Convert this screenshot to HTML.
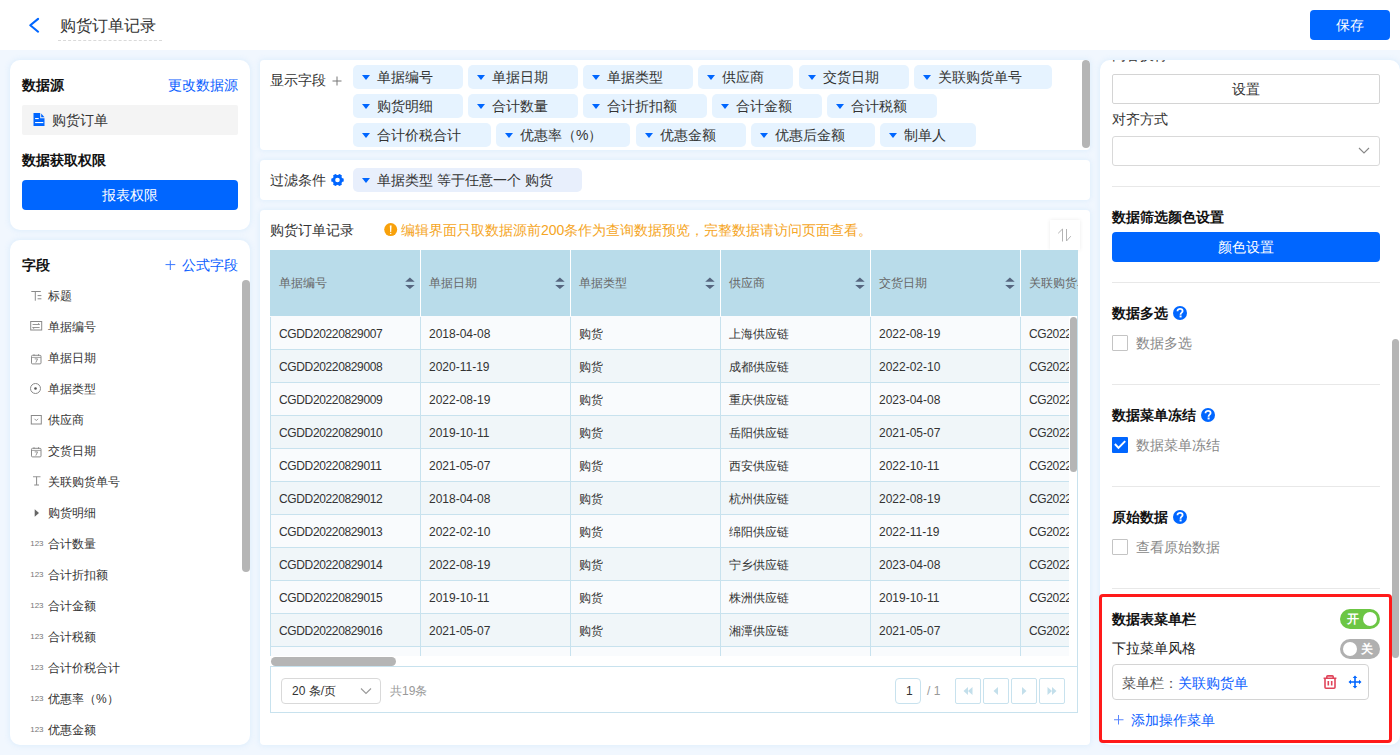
<!DOCTYPE html><html><head><meta charset="utf-8"><style>
*{box-sizing:border-box;margin:0;padding:0}
html,body{width:1400px;height:755px;overflow:hidden}
body{font-family:"Liberation Sans",sans-serif;background:#f1f7fe;color:#333;position:relative}
.a{position:absolute;white-space:nowrap;line-height:20px}
.p{position:absolute;background:#fff;overflow:hidden}
.b{font-weight:bold;color:#111;font-size:14px}
.f14{font-size:14px}.f12{font-size:12px}
.btn{position:absolute;background:#0066ff;color:#fff;border-radius:4px;text-align:center;font-size:14px}
.tag{position:absolute;height:24px;background:#e6f3ff;border-radius:5px}
.tri{position:absolute;width:0;height:0;border-left:4px solid transparent;border-right:4px solid transparent;border-top:5px solid #0066ff}
.hc{position:absolute;top:0;height:66px;background:#b9dcea;border-right:1px solid #fff}
.cell{position:absolute;font-size:12px;color:#333;line-height:20px;white-space:nowrap}
</style></head><body>
<div class="p" style="left:0;top:0;width:1400px;height:50px"></div>
<svg class="a" style="left:27px;top:16px" width="16" height="20" viewBox="0 0 16 20"><path d="M11.1 2.9 L3.3 9.3 L11.1 15.7" fill="none" stroke="#0066ff" stroke-width="2.1" stroke-linecap="round" stroke-linejoin="round"/></svg>
<div class="a" style="left:60px;top:16px;font-size:16px;color:#333">购货订单记录</div>
<div class="a" style="left:58px;top:40px;width:104px;height:0;border-top:1px dashed #d9d9d9"></div>
<div class="btn" style="left:1310px;top:10px;width:80px;height:30px;line-height:30px">保存</div>
<div class="p" style="left:10px;top:60px;width:240px;height:170px;border-radius:10px;box-shadow:0 0 5px 1px rgba(218,236,253,.85)">
<div class="a b" style="left:12px;top:15px">数据源</div>
<div class="a f14" style="left:158px;top:15px;color:#0a5eff">更改数据源</div>
<div class="a" style="left:12px;top:45px;width:216px;height:30px;background:#f4f4f4;border-radius:2px"></div>
<svg class="a" style="left:23px;top:53px" width="12" height="13" viewBox="0 0 12 13"><path d="M0.5 0 H7.2 V5.3 H11.5 V13 H0.5 Z" fill="#0066ff"/><path d="M8.2 0.6 L11.5 4.3 H8.2 Z" fill="#0066ff"/><rect x="2.1" y="5" width="3.6" height="1.1" fill="#fff"/><rect x="2.1" y="9" width="8.2" height="1.1" fill="#fff"/></svg>
<div class="a f14" style="left:42px;top:50px;color:#333">购货订单</div>
<div class="a b" style="left:12px;top:90px">数据获取权限</div>
<div class="btn" style="left:12px;top:120px;width:216px;height:30px;line-height:30px">报表权限</div>
</div>
<div class="p" style="left:10px;top:240px;width:240px;height:505px;border-radius:10px;box-shadow:0 0 5px 1px rgba(218,236,253,.85)">
<div class="a b" style="left:12px;top:15px">字段</div>
<svg class="a" style="left:155px;top:20px" width="11" height="11" viewBox="0 0 11 11"><path d="M5.3 0.5 V10 M0.5 4.6 H10.3" stroke="#3a78ff" stroke-width="1"/></svg>
<div class="a f14" style="left:172px;top:15px;color:#0a5eff">公式字段</div>
<svg class="a" style="left:18px;top:48px" width="16" height="16" viewBox="0 0 16 16"><path d="M3.3 3.5 H12.8 M7.3 3.5 V12.7" stroke="#8a8a8a" stroke-width="1" fill="none"/><path d="M9.6 7.6 H13.4 M9.6 10.8 H13.4" stroke="#8a8a8a" stroke-width="1"/></svg>
<div class="a f12" style="left:38px;top:46px;color:#333">标题</div>
<svg class="a" style="left:18px;top:79px" width="16" height="16" viewBox="0 0 16 16"><rect x="2.7" y="2.5" width="11" height="8.5" fill="none" stroke="#8a8a8a" stroke-width="1"/><path d="M4.6 5.5 H11.6 L10 4.3 M11.6 8.5 H4.6 L6.2 9.7" stroke="#8a8a8a" stroke-width="0.9" fill="none"/></svg>
<div class="a f12" style="left:38px;top:77px;color:#333">单据编号</div>
<svg class="a" style="left:18px;top:110px" width="16" height="16" viewBox="0 0 16 16"><rect x="3.5" y="5.3" width="9.5" height="8.6" rx="1" fill="none" stroke="#8a8a8a" stroke-width="1"/><path d="M3.5 7.4 H13" stroke="#8a8a8a" stroke-width="0.8"/><path d="M6 4.2 V6 M10.5 4.2 V6" stroke="#8a8a8a" stroke-width="0.9"/><path d="M6.7 8.9 H9.6 L7.8 12.6" stroke="#8a8a8a" stroke-width="0.9" fill="none"/></svg>
<div class="a f12" style="left:38px;top:108px;color:#333">单据日期</div>
<svg class="a" style="left:18px;top:141px" width="16" height="16" viewBox="0 0 16 16"><circle cx="7.5" cy="7.5" r="5" fill="none" stroke="#8a8a8a" stroke-width="1"/><circle cx="7.5" cy="7.5" r="1.3" fill="#555"/></svg>
<div class="a f12" style="left:38px;top:139px;color:#333">单据类型</div>
<svg class="a" style="left:18px;top:172px" width="16" height="16" viewBox="0 0 16 16"><rect x="3.3" y="3.5" width="10" height="8.5" fill="none" stroke="#8a8a8a" stroke-width="1"/><path d="M6.5 6.8 L8.3 8.6 L10.1 6.8" stroke="#8a8a8a" stroke-width="0.9" fill="none"/></svg>
<div class="a f12" style="left:38px;top:170px;color:#333">供应商</div>
<svg class="a" style="left:18px;top:203px" width="16" height="16" viewBox="0 0 16 16"><rect x="3.5" y="5.3" width="9.5" height="8.6" rx="1" fill="none" stroke="#8a8a8a" stroke-width="1"/><path d="M3.5 7.4 H13" stroke="#8a8a8a" stroke-width="0.8"/><path d="M6 4.2 V6 M10.5 4.2 V6" stroke="#8a8a8a" stroke-width="0.9"/><path d="M6.7 8.9 H9.6 L7.8 12.6" stroke="#8a8a8a" stroke-width="0.9" fill="none"/></svg>
<div class="a f12" style="left:38px;top:201px;color:#333">交货日期</div>
<svg class="a" style="left:18px;top:234px" width="16" height="16" viewBox="0 0 16 16"><path d="M5 2.7 H12.5" stroke="#aaa" stroke-width="1.2"/><path d="M8.6 2.7 V11 M6.2 11 H11" stroke="#8a8a8a" stroke-width="1" fill="none"/></svg>
<div class="a f12" style="left:38px;top:232px;color:#333">关联购货单号</div>
<svg class="a" style="left:18px;top:265px" width="16" height="16" viewBox="0 0 16 16"><path d="M6.7 4.2 L11 8 L6.7 11.8 Z" fill="#666"/></svg>
<div class="a f12" style="left:38px;top:263px;color:#333">购货明细</div>
<svg class="a" style="left:18px;top:296px" width="16" height="16" viewBox="0 0 16 16"><text x="2.2" y="10.3" font-size="8" fill="#777" font-family="Liberation Sans">123</text></svg>
<div class="a f12" style="left:38px;top:294px;color:#333">合计数量</div>
<svg class="a" style="left:18px;top:327px" width="16" height="16" viewBox="0 0 16 16"><text x="2.2" y="10.3" font-size="8" fill="#777" font-family="Liberation Sans">123</text></svg>
<div class="a f12" style="left:38px;top:325px;color:#333">合计折扣额</div>
<svg class="a" style="left:18px;top:358px" width="16" height="16" viewBox="0 0 16 16"><text x="2.2" y="10.3" font-size="8" fill="#777" font-family="Liberation Sans">123</text></svg>
<div class="a f12" style="left:38px;top:356px;color:#333">合计金额</div>
<svg class="a" style="left:18px;top:389px" width="16" height="16" viewBox="0 0 16 16"><text x="2.2" y="10.3" font-size="8" fill="#777" font-family="Liberation Sans">123</text></svg>
<div class="a f12" style="left:38px;top:387px;color:#333">合计税额</div>
<svg class="a" style="left:18px;top:420px" width="16" height="16" viewBox="0 0 16 16"><text x="2.2" y="10.3" font-size="8" fill="#777" font-family="Liberation Sans">123</text></svg>
<div class="a f12" style="left:38px;top:418px;color:#333">合计价税合计</div>
<svg class="a" style="left:18px;top:451px" width="16" height="16" viewBox="0 0 16 16"><text x="2.2" y="10.3" font-size="8" fill="#777" font-family="Liberation Sans">123</text></svg>
<div class="a f12" style="left:38px;top:449px;color:#333">优惠率（%）</div>
<svg class="a" style="left:18px;top:482px" width="16" height="16" viewBox="0 0 16 16"><text x="2.2" y="10.3" font-size="8" fill="#777" font-family="Liberation Sans">123</text></svg>
<div class="a f12" style="left:38px;top:480px;color:#333">优惠金额</div>
<div class="a" style="left:232px;top:40px;width:8px;height:292px;background:#b5b5b5;border-radius:4px"></div>
</div>
<div class="p" style="left:260px;top:60px;width:830px;height:90px;border-radius:4px;box-shadow:0 0 5px 1px rgba(218,236,253,.85)">
<div class="a f14" style="left:10px;top:10px;color:#333">显示字段</div>
<svg class="a" style="left:72px;top:16px" width="10" height="10" viewBox="0 0 10 10"><path d="M5 0.5 V9.5 M0.5 5 H9.5" stroke="#777" stroke-width="1"/></svg>
<div class="tag" style="left:93px;top:5px;width:110px"></div>
<div class="tri" style="left:102px;top:15px"></div>
<div class="a f14" style="left:117px;top:7px;color:#333">单据编号</div>
<div class="tag" style="left:208px;top:5px;width:110px"></div>
<div class="tri" style="left:217px;top:15px"></div>
<div class="a f14" style="left:232px;top:7px;color:#333">单据日期</div>
<div class="tag" style="left:323px;top:5px;width:110px"></div>
<div class="tri" style="left:332px;top:15px"></div>
<div class="a f14" style="left:347px;top:7px;color:#333">单据类型</div>
<div class="tag" style="left:438px;top:5px;width:95px"></div>
<div class="tri" style="left:447px;top:15px"></div>
<div class="a f14" style="left:462px;top:7px;color:#333">供应商</div>
<div class="tag" style="left:539px;top:5px;width:110px"></div>
<div class="tri" style="left:548px;top:15px"></div>
<div class="a f14" style="left:563px;top:7px;color:#333">交货日期</div>
<div class="tag" style="left:654px;top:5px;width:138px"></div>
<div class="tri" style="left:663px;top:15px"></div>
<div class="a f14" style="left:678px;top:7px;color:#333">关联购货单号</div>
<div class="tag" style="left:93px;top:34px;width:110px"></div>
<div class="tri" style="left:102px;top:44px"></div>
<div class="a f14" style="left:117px;top:36px;color:#333">购货明细</div>
<div class="tag" style="left:208px;top:34px;width:110px"></div>
<div class="tri" style="left:217px;top:44px"></div>
<div class="a f14" style="left:232px;top:36px;color:#333">合计数量</div>
<div class="tag" style="left:323px;top:34px;width:124px"></div>
<div class="tri" style="left:332px;top:44px"></div>
<div class="a f14" style="left:347px;top:36px;color:#333">合计折扣额</div>
<div class="tag" style="left:452px;top:34px;width:110px"></div>
<div class="tri" style="left:461px;top:44px"></div>
<div class="a f14" style="left:476px;top:36px;color:#333">合计金额</div>
<div class="tag" style="left:567px;top:34px;width:110px"></div>
<div class="tri" style="left:576px;top:44px"></div>
<div class="a f14" style="left:591px;top:36px;color:#333">合计税额</div>
<div class="tag" style="left:93px;top:63px;width:138px"></div>
<div class="tri" style="left:102px;top:73px"></div>
<div class="a f14" style="left:117px;top:65px;color:#333">合计价税合计</div>
<div class="tag" style="left:236px;top:63px;width:134px"></div>
<div class="tri" style="left:245px;top:73px"></div>
<div class="a f14" style="left:260px;top:65px;color:#333">优惠率（%）</div>
<div class="tag" style="left:376px;top:63px;width:110px"></div>
<div class="tri" style="left:385px;top:73px"></div>
<div class="a f14" style="left:400px;top:65px;color:#333">优惠金额</div>
<div class="tag" style="left:491px;top:63px;width:124px"></div>
<div class="tri" style="left:500px;top:73px"></div>
<div class="a f14" style="left:515px;top:65px;color:#333">优惠后金额</div>
<div class="tag" style="left:620px;top:63px;width:96px"></div>
<div class="tri" style="left:629px;top:73px"></div>
<div class="a f14" style="left:644px;top:65px;color:#333">制单人</div>
<div class="a" style="left:822px;top:0px;width:8px;height:88px;background:#b5b5b5;border-radius:4px"></div>
</div>
<div class="p" style="left:260px;top:160px;width:830px;height:40px;border-radius:4px;box-shadow:0 0 5px 1px rgba(218,236,253,.85)">
<div class="a f14" style="left:10px;top:10px;color:#333">过滤条件</div>
<svg class="a" style="left:70px;top:13px" width="15" height="14" viewBox="0 0 15 14"><g transform="translate(7.5,7)"><circle r="5.1" fill="#0066ff"/><rect x="-1.8" y="-6.2" width="3.6" height="3" rx="0.9" fill="#0066ff" transform="rotate(30)"/><rect x="-1.8" y="-6.2" width="3.6" height="3" rx="0.9" fill="#0066ff" transform="rotate(90)"/><rect x="-1.8" y="-6.2" width="3.6" height="3" rx="0.9" fill="#0066ff" transform="rotate(150)"/><rect x="-1.8" y="-6.2" width="3.6" height="3" rx="0.9" fill="#0066ff" transform="rotate(210)"/><rect x="-1.8" y="-6.2" width="3.6" height="3" rx="0.9" fill="#0066ff" transform="rotate(270)"/><rect x="-1.8" y="-6.2" width="3.6" height="3" rx="0.9" fill="#0066ff" transform="rotate(330)"/><circle r="2.3" fill="#fff"/></g></svg>
<div class="tag" style="left:93px;top:8px;width:229px;background:#e8effc"></div>
<div class="tri" style="left:102px;top:18px"></div>
<div class="a f14" style="left:117px;top:10px;color:#333">单据类型 等于任意一个 购货</div>
</div>
<div class="p" style="left:260px;top:210px;width:830px;height:535px;border-radius:4px;box-shadow:0 0 5px 1px rgba(218,236,253,.85)">
<div class="a f14" style="left:10px;top:10px;color:#333">购货订单记录</div>
<svg class="a" style="left:124px;top:13px" width="14" height="14" viewBox="0 0 14 14"><circle cx="6.7" cy="6.6" r="6.5" fill="#f8a10b"/><path d="M5.8 2.5 H7.6 L7.2 9 H6.2 Z" fill="#fff"/><rect x="6.1" y="9.9" width="1.2" height="1.2" fill="#fff"/></svg>
<div class="a f14" style="left:141px;top:10px;color:#f5a524">编辑界面只取数据源前200条作为查询数据预览，完整数据请访问页面查看。</div>
<div class="a" style="left:790px;top:10px;width:30px;height:30px;background:#fff;box-shadow:0 0 4px rgba(0,0,0,.08)"></div>
<svg class="a" style="left:797px;top:17px" width="16" height="16" viewBox="0 0 16 16"><path d="M5.5 14.5 V2 L1.2 6.3" stroke="#b3b3b3" stroke-width="1" fill="none"/><path d="M9.5 2 V14 L13.8 9.2" stroke="#b3b3b3" stroke-width="1" fill="none"/></svg>
<div class="a" style="left:10px;top:40px;width:808px;height:66px;overflow:hidden">
<div class="a" style="left:0;top:0;width:900px;height:66px;background:#b9dcea"></div>
<div class="a" style="left:150px;top:0;width:1px;height:66px;background:#fff"></div>
<div class="cell" style="left:9px;top:23px;color:#666">单据编号</div>
<svg class="a" style="left:135px;top:27px" width="10" height="13" viewBox="0 0 10 13"><path d="M0.2 4.8 L4.9 0.6 L9.7 4.8 Z M0.2 8.1 L4.9 12.1 L9.7 8.1 Z" fill="#56667f"/></svg>
<div class="a" style="left:300px;top:0;width:1px;height:66px;background:#fff"></div>
<div class="cell" style="left:159px;top:23px;color:#666">单据日期</div>
<svg class="a" style="left:285px;top:27px" width="10" height="13" viewBox="0 0 10 13"><path d="M0.2 4.8 L4.9 0.6 L9.7 4.8 Z M0.2 8.1 L4.9 12.1 L9.7 8.1 Z" fill="#56667f"/></svg>
<div class="a" style="left:450px;top:0;width:1px;height:66px;background:#fff"></div>
<div class="cell" style="left:309px;top:23px;color:#666">单据类型</div>
<svg class="a" style="left:435px;top:27px" width="10" height="13" viewBox="0 0 10 13"><path d="M0.2 4.8 L4.9 0.6 L9.7 4.8 Z M0.2 8.1 L4.9 12.1 L9.7 8.1 Z" fill="#56667f"/></svg>
<div class="a" style="left:600px;top:0;width:1px;height:66px;background:#fff"></div>
<div class="cell" style="left:459px;top:23px;color:#666">供应商</div>
<svg class="a" style="left:585px;top:27px" width="10" height="13" viewBox="0 0 10 13"><path d="M0.2 4.8 L4.9 0.6 L9.7 4.8 Z M0.2 8.1 L4.9 12.1 L9.7 8.1 Z" fill="#56667f"/></svg>
<div class="a" style="left:750px;top:0;width:1px;height:66px;background:#fff"></div>
<div class="cell" style="left:609px;top:23px;color:#666">交货日期</div>
<svg class="a" style="left:735px;top:27px" width="10" height="13" viewBox="0 0 10 13"><path d="M0.2 4.8 L4.9 0.6 L9.7 4.8 Z M0.2 8.1 L4.9 12.1 L9.7 8.1 Z" fill="#56667f"/></svg>
<div class="a" style="left:900px;top:0;width:1px;height:66px;background:#fff"></div>
<div class="cell" style="left:759px;top:23px;color:#666">关联购货单号</div>
</div>
<div class="a" style="left:10px;top:106px;width:808px;height:340px;background:#fff"></div>
<div class="a" style="left:817px;top:106px;width:1px;height:397px;background:#c8e2ee"></div>
<div class="a" style="left:10px;top:40px;width:799px;height:406px;overflow:hidden">
<div class="a" style="left:0;top:66px;width:900px;height:34px;background:#f9fbfd;border-bottom:1px solid #c8e2ee"></div>
<div class="a" style="left:0px;top:67px;width:1px;height:32px;background:#c8e2ee"></div>
<div class="a" style="left:150px;top:67px;width:1px;height:32px;background:#c8e2ee"></div>
<div class="a" style="left:300px;top:67px;width:1px;height:32px;background:#c8e2ee"></div>
<div class="a" style="left:450px;top:67px;width:1px;height:32px;background:#c8e2ee"></div>
<div class="a" style="left:600px;top:67px;width:1px;height:32px;background:#c8e2ee"></div>
<div class="a" style="left:750px;top:67px;width:1px;height:32px;background:#c8e2ee"></div>
<div class="cell" style="left:9px;top:74px;letter-spacing:-0.36px;">CGDD20220829007</div>
<div class="cell" style="left:159px;top:74px;">2018-04-08</div>
<div class="cell" style="left:309px;top:74px;">购货</div>
<div class="cell" style="left:459px;top:74px;">上海供应链</div>
<div class="cell" style="left:609px;top:74px;">2022-08-19</div>
<div class="cell" style="left:759px;top:74px;letter-spacing:-0.36px;">CG20220829007</div>
<div class="a" style="left:0;top:100px;width:900px;height:33px;background:#f0f6f9;border-bottom:1px solid #c8e2ee"></div>
<div class="a" style="left:0px;top:100px;width:1px;height:32px;background:#c8e2ee"></div>
<div class="a" style="left:150px;top:100px;width:1px;height:32px;background:#c8e2ee"></div>
<div class="a" style="left:300px;top:100px;width:1px;height:32px;background:#c8e2ee"></div>
<div class="a" style="left:450px;top:100px;width:1px;height:32px;background:#c8e2ee"></div>
<div class="a" style="left:600px;top:100px;width:1px;height:32px;background:#c8e2ee"></div>
<div class="a" style="left:750px;top:100px;width:1px;height:32px;background:#c8e2ee"></div>
<div class="cell" style="left:9px;top:107px;letter-spacing:-0.36px;">CGDD20220829008</div>
<div class="cell" style="left:159px;top:107px;">2020-11-19</div>
<div class="cell" style="left:309px;top:107px;">购货</div>
<div class="cell" style="left:459px;top:107px;">成都供应链</div>
<div class="cell" style="left:609px;top:107px;">2022-02-10</div>
<div class="cell" style="left:759px;top:107px;letter-spacing:-0.36px;">CG20220829008</div>
<div class="a" style="left:0;top:133px;width:900px;height:33px;background:#f9fbfd;border-bottom:1px solid #c8e2ee"></div>
<div class="a" style="left:0px;top:133px;width:1px;height:32px;background:#c8e2ee"></div>
<div class="a" style="left:150px;top:133px;width:1px;height:32px;background:#c8e2ee"></div>
<div class="a" style="left:300px;top:133px;width:1px;height:32px;background:#c8e2ee"></div>
<div class="a" style="left:450px;top:133px;width:1px;height:32px;background:#c8e2ee"></div>
<div class="a" style="left:600px;top:133px;width:1px;height:32px;background:#c8e2ee"></div>
<div class="a" style="left:750px;top:133px;width:1px;height:32px;background:#c8e2ee"></div>
<div class="cell" style="left:9px;top:140px;letter-spacing:-0.36px;">CGDD20220829009</div>
<div class="cell" style="left:159px;top:140px;">2022-08-19</div>
<div class="cell" style="left:309px;top:140px;">购货</div>
<div class="cell" style="left:459px;top:140px;">重庆供应链</div>
<div class="cell" style="left:609px;top:140px;">2023-04-08</div>
<div class="cell" style="left:759px;top:140px;letter-spacing:-0.36px;">CG20220829009</div>
<div class="a" style="left:0;top:166px;width:900px;height:33px;background:#f0f6f9;border-bottom:1px solid #c8e2ee"></div>
<div class="a" style="left:0px;top:166px;width:1px;height:32px;background:#c8e2ee"></div>
<div class="a" style="left:150px;top:166px;width:1px;height:32px;background:#c8e2ee"></div>
<div class="a" style="left:300px;top:166px;width:1px;height:32px;background:#c8e2ee"></div>
<div class="a" style="left:450px;top:166px;width:1px;height:32px;background:#c8e2ee"></div>
<div class="a" style="left:600px;top:166px;width:1px;height:32px;background:#c8e2ee"></div>
<div class="a" style="left:750px;top:166px;width:1px;height:32px;background:#c8e2ee"></div>
<div class="cell" style="left:9px;top:173px;letter-spacing:-0.36px;">CGDD20220829010</div>
<div class="cell" style="left:159px;top:173px;">2019-10-11</div>
<div class="cell" style="left:309px;top:173px;">购货</div>
<div class="cell" style="left:459px;top:173px;">岳阳供应链</div>
<div class="cell" style="left:609px;top:173px;">2021-05-07</div>
<div class="cell" style="left:759px;top:173px;letter-spacing:-0.36px;">CG20220829010</div>
<div class="a" style="left:0;top:199px;width:900px;height:33px;background:#f9fbfd;border-bottom:1px solid #c8e2ee"></div>
<div class="a" style="left:0px;top:199px;width:1px;height:32px;background:#c8e2ee"></div>
<div class="a" style="left:150px;top:199px;width:1px;height:32px;background:#c8e2ee"></div>
<div class="a" style="left:300px;top:199px;width:1px;height:32px;background:#c8e2ee"></div>
<div class="a" style="left:450px;top:199px;width:1px;height:32px;background:#c8e2ee"></div>
<div class="a" style="left:600px;top:199px;width:1px;height:32px;background:#c8e2ee"></div>
<div class="a" style="left:750px;top:199px;width:1px;height:32px;background:#c8e2ee"></div>
<div class="cell" style="left:9px;top:206px;letter-spacing:-0.36px;">CGDD20220829011</div>
<div class="cell" style="left:159px;top:206px;">2021-05-07</div>
<div class="cell" style="left:309px;top:206px;">购货</div>
<div class="cell" style="left:459px;top:206px;">西安供应链</div>
<div class="cell" style="left:609px;top:206px;">2022-10-11</div>
<div class="cell" style="left:759px;top:206px;letter-spacing:-0.36px;">CG20220829011</div>
<div class="a" style="left:0;top:232px;width:900px;height:33px;background:#f0f6f9;border-bottom:1px solid #c8e2ee"></div>
<div class="a" style="left:0px;top:232px;width:1px;height:32px;background:#c8e2ee"></div>
<div class="a" style="left:150px;top:232px;width:1px;height:32px;background:#c8e2ee"></div>
<div class="a" style="left:300px;top:232px;width:1px;height:32px;background:#c8e2ee"></div>
<div class="a" style="left:450px;top:232px;width:1px;height:32px;background:#c8e2ee"></div>
<div class="a" style="left:600px;top:232px;width:1px;height:32px;background:#c8e2ee"></div>
<div class="a" style="left:750px;top:232px;width:1px;height:32px;background:#c8e2ee"></div>
<div class="cell" style="left:9px;top:239px;letter-spacing:-0.36px;">CGDD20220829012</div>
<div class="cell" style="left:159px;top:239px;">2018-04-08</div>
<div class="cell" style="left:309px;top:239px;">购货</div>
<div class="cell" style="left:459px;top:239px;">杭州供应链</div>
<div class="cell" style="left:609px;top:239px;">2022-08-19</div>
<div class="cell" style="left:759px;top:239px;letter-spacing:-0.36px;">CG20220829012</div>
<div class="a" style="left:0;top:265px;width:900px;height:33px;background:#f9fbfd;border-bottom:1px solid #c8e2ee"></div>
<div class="a" style="left:0px;top:265px;width:1px;height:32px;background:#c8e2ee"></div>
<div class="a" style="left:150px;top:265px;width:1px;height:32px;background:#c8e2ee"></div>
<div class="a" style="left:300px;top:265px;width:1px;height:32px;background:#c8e2ee"></div>
<div class="a" style="left:450px;top:265px;width:1px;height:32px;background:#c8e2ee"></div>
<div class="a" style="left:600px;top:265px;width:1px;height:32px;background:#c8e2ee"></div>
<div class="a" style="left:750px;top:265px;width:1px;height:32px;background:#c8e2ee"></div>
<div class="cell" style="left:9px;top:272px;letter-spacing:-0.36px;">CGDD20220829013</div>
<div class="cell" style="left:159px;top:272px;">2022-02-10</div>
<div class="cell" style="left:309px;top:272px;">购货</div>
<div class="cell" style="left:459px;top:272px;">绵阳供应链</div>
<div class="cell" style="left:609px;top:272px;">2022-11-19</div>
<div class="cell" style="left:759px;top:272px;letter-spacing:-0.36px;">CG20220829013</div>
<div class="a" style="left:0;top:298px;width:900px;height:33px;background:#f0f6f9;border-bottom:1px solid #c8e2ee"></div>
<div class="a" style="left:0px;top:298px;width:1px;height:32px;background:#c8e2ee"></div>
<div class="a" style="left:150px;top:298px;width:1px;height:32px;background:#c8e2ee"></div>
<div class="a" style="left:300px;top:298px;width:1px;height:32px;background:#c8e2ee"></div>
<div class="a" style="left:450px;top:298px;width:1px;height:32px;background:#c8e2ee"></div>
<div class="a" style="left:600px;top:298px;width:1px;height:32px;background:#c8e2ee"></div>
<div class="a" style="left:750px;top:298px;width:1px;height:32px;background:#c8e2ee"></div>
<div class="cell" style="left:9px;top:305px;letter-spacing:-0.36px;">CGDD20220829014</div>
<div class="cell" style="left:159px;top:305px;">2022-08-19</div>
<div class="cell" style="left:309px;top:305px;">购货</div>
<div class="cell" style="left:459px;top:305px;">宁乡供应链</div>
<div class="cell" style="left:609px;top:305px;">2023-04-08</div>
<div class="cell" style="left:759px;top:305px;letter-spacing:-0.36px;">CG20220829014</div>
<div class="a" style="left:0;top:331px;width:900px;height:33px;background:#f9fbfd;border-bottom:1px solid #c8e2ee"></div>
<div class="a" style="left:0px;top:331px;width:1px;height:32px;background:#c8e2ee"></div>
<div class="a" style="left:150px;top:331px;width:1px;height:32px;background:#c8e2ee"></div>
<div class="a" style="left:300px;top:331px;width:1px;height:32px;background:#c8e2ee"></div>
<div class="a" style="left:450px;top:331px;width:1px;height:32px;background:#c8e2ee"></div>
<div class="a" style="left:600px;top:331px;width:1px;height:32px;background:#c8e2ee"></div>
<div class="a" style="left:750px;top:331px;width:1px;height:32px;background:#c8e2ee"></div>
<div class="cell" style="left:9px;top:338px;letter-spacing:-0.36px;">CGDD20220829015</div>
<div class="cell" style="left:159px;top:338px;">2019-10-11</div>
<div class="cell" style="left:309px;top:338px;">购货</div>
<div class="cell" style="left:459px;top:338px;">株洲供应链</div>
<div class="cell" style="left:609px;top:338px;">2019-10-11</div>
<div class="cell" style="left:759px;top:338px;letter-spacing:-0.36px;">CG20220829015</div>
<div class="a" style="left:0;top:364px;width:900px;height:33px;background:#f0f6f9;border-bottom:1px solid #c8e2ee"></div>
<div class="a" style="left:0px;top:364px;width:1px;height:32px;background:#c8e2ee"></div>
<div class="a" style="left:150px;top:364px;width:1px;height:32px;background:#c8e2ee"></div>
<div class="a" style="left:300px;top:364px;width:1px;height:32px;background:#c8e2ee"></div>
<div class="a" style="left:450px;top:364px;width:1px;height:32px;background:#c8e2ee"></div>
<div class="a" style="left:600px;top:364px;width:1px;height:32px;background:#c8e2ee"></div>
<div class="a" style="left:750px;top:364px;width:1px;height:32px;background:#c8e2ee"></div>
<div class="cell" style="left:9px;top:371px;letter-spacing:-0.36px;">CGDD20220829016</div>
<div class="cell" style="left:159px;top:371px;">2021-05-07</div>
<div class="cell" style="left:309px;top:371px;">购货</div>
<div class="cell" style="left:459px;top:371px;">湘潭供应链</div>
<div class="cell" style="left:609px;top:371px;">2021-05-07</div>
<div class="cell" style="left:759px;top:371px;letter-spacing:-0.36px;">CG20220829016</div>
<div class="a" style="left:0;top:397px;width:900px;height:33px;background:#f9fbfd;border-bottom:1px solid #c8e2ee"></div>
<div class="a" style="left:0px;top:397px;width:1px;height:32px;background:#c8e2ee"></div>
<div class="a" style="left:150px;top:397px;width:1px;height:32px;background:#c8e2ee"></div>
<div class="a" style="left:300px;top:397px;width:1px;height:32px;background:#c8e2ee"></div>
<div class="a" style="left:450px;top:397px;width:1px;height:32px;background:#c8e2ee"></div>
<div class="a" style="left:600px;top:397px;width:1px;height:32px;background:#c8e2ee"></div>
<div class="a" style="left:750px;top:397px;width:1px;height:32px;background:#c8e2ee"></div>
<div class="cell" style="left:9px;top:404px;letter-spacing:-0.36px;">CGDD20220829017</div>
<div class="cell" style="left:159px;top:404px;">2022-10-11</div>
<div class="cell" style="left:309px;top:404px;">购货</div>
<div class="cell" style="left:459px;top:404px;">长沙供应链</div>
<div class="cell" style="left:609px;top:404px;">2022-02-10</div>
<div class="cell" style="left:759px;top:404px;letter-spacing:-0.36px;">CG20220829017</div>
</div>
<div class="a" style="left:810px;top:107px;width:7px;height:155px;background:#b5b5b5;border-radius:3.5px"></div>
<div class="a" style="left:10px;top:446px;width:807px;height:10px;background:#fff"></div>
<div class="a" style="left:11px;top:447px;width:125px;height:9px;background:#b5b5b5;border-radius:4.5px"></div>
<div class="a" style="left:10px;top:456px;width:808px;height:47px;border:1px solid #c8e2ee;border-top-width:1px"></div>
<div class="a" style="left:21px;top:468px;width:100px;height:26px;border:1px solid #d9d9d9;border-radius:4px"></div>
<div class="a f12" style="left:32px;top:471px;color:#333">20 条/页</div>
<svg class="a" style="left:100px;top:477px" width="12" height="8" viewBox="0 0 12 8"><path d="M1 1.5 L6 6.5 L11 1.5" stroke="#999" stroke-width="1.1" fill="none"/></svg>
<div class="a f12" style="left:130px;top:471px;color:#999">共19条</div>
<div class="a" style="left:635px;top:468px;width:26px;height:26px;border:1px solid #c8e2ee;border-radius:4px"></div>
<div class="a f12" style="left:646px;top:471px;color:#333">1</div>
<div class="a f12" style="left:667px;top:471px;color:#999">/ 1</div>
<div class="a" style="left:695px;top:468px;width:26px;height:26px;border:1px solid #c8e2ee;border-radius:2px"></div>
<div class="a" style="left:723px;top:468px;width:26px;height:26px;border:1px solid #c8e2ee;border-radius:2px"></div>
<div class="a" style="left:751px;top:468px;width:26px;height:26px;border:1px solid #c8e2ee;border-radius:2px"></div>
<div class="a" style="left:779px;top:468px;width:26px;height:26px;border:1px solid #c8e2ee;border-radius:2px"></div>
<svg class="a" style="left:695px;top:468px" width="26" height="26" viewBox="0 0 26 26"><path d="M8.5 13 L13 9 V17 Z M13 13 L17.5 9 V17 Z" fill="#c3dfeb"/></svg>
<svg class="a" style="left:723px;top:468px" width="26" height="26" viewBox="0 0 26 26"><path d="M10.5 13 L15 9 V17 Z" fill="#c3dfeb"/></svg>
<svg class="a" style="left:751px;top:468px" width="26" height="26" viewBox="0 0 26 26"><path d="M15.5 13 L11 9 V17 Z" fill="#c3dfeb"/></svg>
<svg class="a" style="left:779px;top:468px" width="26" height="26" viewBox="0 0 26 26"><path d="M13 13 L8.5 9 V17 Z M17.5 13 L13 9 V17 Z" fill="#c3dfeb"/></svg>
</div>
<div class="p" style="left:1100px;top:60px;width:300px;height:685px;border-radius:10px;box-shadow:0 0 5px 1px rgba(218,236,253,.85)">
<div class="a f14" style="left:12px;top:-15px;color:#333">内容换行</div>
<div class="a" style="left:12px;top:14px;width:268px;height:30px;border:1px solid #d4d4d4;border-radius:2px;text-align:center;line-height:28px;font-size:14px;color:#333">设置</div>
<div class="a f14" style="left:12px;top:49px;color:#333">对齐方式</div>
<div class="a" style="left:12px;top:76px;width:268px;height:30px;border:1px solid #d9d9d9;border-radius:3px"></div>
<svg class="a" style="left:258px;top:86px" width="12" height="9" viewBox="0 0 12 9"><path d="M1 2 L6 7 L11 2" stroke="#888" stroke-width="1.1" fill="none"/></svg>
<div class="a" style="left:12px;top:126px;width:268px;height:1px;background:#e8e8e8"></div>
<div class="a" style="left:12px;top:222px;width:268px;height:1px;background:#e8e8e8"></div>
<div class="a" style="left:12px;top:324px;width:268px;height:1px;background:#e8e8e8"></div>
<div class="a" style="left:12px;top:426px;width:268px;height:1px;background:#e8e8e8"></div>
<div class="a" style="left:12px;top:528px;width:268px;height:1px;background:#e8e8e8"></div>
<div class="a b" style="left:12px;top:147px">数据筛选颜色设置</div>
<div class="btn" style="left:12px;top:172px;width:268px;height:30px;line-height:30px">颜色设置</div>
<div class="a b" style="left:12px;top:243px">数据多选</div><svg class="a" style="left:73px;top:246px" width="14" height="14" viewBox="0 0 14 14"><circle cx="7" cy="7" r="7" fill="#0066ff"/><path d="M4.5 5.3 C4.5 3.6 5.7 2.8 7.1 2.8 C8.6 2.8 9.6 3.7 9.6 5 C9.6 6.5 7.6 6.7 7.6 8.3 V8.7" stroke="#fff" stroke-width="1.8" fill="none"/><rect x="6.6" y="9.5" width="2" height="1.9" fill="#fff"/></svg>
<div class="a" style="left:12px;top:275px;width:16px;height:16px;border:1px solid #c4c4c4;border-radius:1px"></div><div class="a f14" style="left:36px;top:273px;color:#888">数据多选</div>
<div class="a b" style="left:12px;top:345px">数据菜单冻结</div><svg class="a" style="left:101px;top:348px" width="14" height="14" viewBox="0 0 14 14"><circle cx="7" cy="7" r="7" fill="#0066ff"/><path d="M4.5 5.3 C4.5 3.6 5.7 2.8 7.1 2.8 C8.6 2.8 9.6 3.7 9.6 5 C9.6 6.5 7.6 6.7 7.6 8.3 V8.7" stroke="#fff" stroke-width="1.8" fill="none"/><rect x="6.6" y="9.5" width="2" height="1.9" fill="#fff"/></svg>
<div class="a" style="left:12px;top:377px;width:16px;height:16px;background:#0066ff;border-radius:1px"></div><svg class="a" style="left:12px;top:377px" width="16" height="16" viewBox="0 0 16 16"><path d="M2.9 7 L6.5 10.9 L13.2 4.1" stroke="#fff" stroke-width="2" fill="none"/></svg><div class="a f14" style="left:36px;top:375px;color:#888">数据菜单冻结</div>
<div class="a b" style="left:12px;top:447px">原始数据</div><svg class="a" style="left:73px;top:450px" width="14" height="14" viewBox="0 0 14 14"><circle cx="7" cy="7" r="7" fill="#0066ff"/><path d="M4.5 5.3 C4.5 3.6 5.7 2.8 7.1 2.8 C8.6 2.8 9.6 3.7 9.6 5 C9.6 6.5 7.6 6.7 7.6 8.3 V8.7" stroke="#fff" stroke-width="1.8" fill="none"/><rect x="6.6" y="9.5" width="2" height="1.9" fill="#fff"/></svg>
<div class="a" style="left:12px;top:479px;width:16px;height:16px;border:1px solid #c4c4c4;border-radius:1px"></div><div class="a f14" style="left:36px;top:477px;color:#888">查看原始数据</div>
<div class="a" style="left:292px;top:279px;width:7px;height:319px;background:#b5b5b5;border-radius:3.5px"></div>
<div class="a b" style="left:12px;top:549px">数据表菜单栏</div>
<div class="a f14" style="left:12px;top:578px;color:#222">下拉菜单风格</div>
<div class="a" style="left:240px;top:549px;width:40px;height:20px;border-radius:10px;background:#6cc644"></div>
<div class="a" style="left:263px;top:552px;width:14px;height:14px;border-radius:7px;background:#fff"></div>
<div class="a" style="left:247px;top:549px;font-size:12px;color:#fff;font-weight:bold">开</div>
<div class="a" style="left:240px;top:579px;width:40px;height:20px;border-radius:10px;background:#b0b0b0"></div>
<div class="a" style="left:243px;top:582px;width:14px;height:14px;border-radius:7px;background:#fff"></div>
<div class="a" style="left:261px;top:579px;font-size:12px;color:#fff;font-weight:bold">关</div>
<div class="a" style="left:12px;top:604px;width:257px;height:36px;border:1px solid #d4d4d4;border-radius:4px"></div>
<div class="a f14" style="left:22px;top:613px;color:#555">菜单栏：<span style="color:#0a5eff">关联购货单</span></div>
<svg class="a" style="left:223px;top:615px" width="14" height="14" viewBox="0 0 14 14"><path d="M0.6 3.2 H13.4" stroke="#e0445a" stroke-width="1.6"/><path d="M3.8 3.2 V1.8 Q3.8 0.9 4.7 0.9 H9.3 Q10.2 0.9 10.2 1.8 V3.2 M2 3.2 V12.2 Q2 13.2 3 13.2 H11 Q12 13.2 12 12.2 V3.2 M5.3 6 V10.6 M8.7 6 V10.6" stroke="#e0445a" stroke-width="1.6" fill="none"/></svg>
<svg class="a" style="left:248px;top:615px" width="14" height="14" viewBox="0 0 14 14"><path d="M7 0.5 L9.3 3 H4.7 Z M7 13.5 L4.7 11 H9.3 Z M0.5 7 L3 4.7 V9.3 Z M13.5 7 L11 9.3 V4.7 Z" fill="#0066ff"/><path d="M7 2.5 V11.5 M2.5 7 H11.5" stroke="#0066ff" stroke-width="1.6"/></svg>
<svg class="a" style="left:13px;top:654px" width="11" height="11" viewBox="0 0 11 11"><path d="M5.5 1 V10.5 M1 5.75 H10.5" stroke="#5a86ff" stroke-width="1"/></svg>
<div class="a f14" style="left:31px;top:650px;color:#0a5eff">添加操作菜单</div>
</div>
<div class="a" style="left:1099px;top:594px;width:293px;height:149px;border:3px solid #ff1a1a;border-radius:4px"></div>
</body></html>
